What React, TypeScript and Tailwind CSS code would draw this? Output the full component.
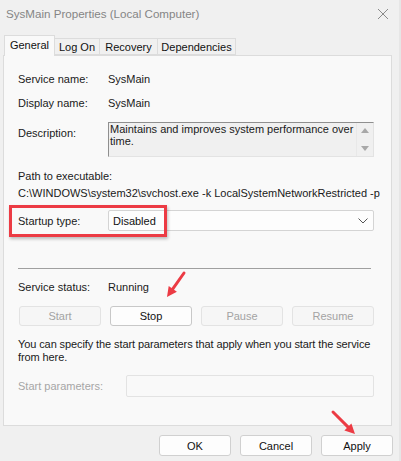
import React from "react";

const font = { fontFamily: '"Liberation Sans", Arial, sans-serif' };

function Btn({ label, disabled, strong }: { label: string; disabled?: boolean; strong?: boolean }) {
  return (
    <div
      className={
        "flex h-[20px] w-[82px] items-center justify-center rounded-[3px] border text-[11px] " +
        (disabled
          ? "border-[#e3e3e3] bg-[#f6f6f6] text-[#a3a3a3]"
          : strong
          ? "border-[#c8c8c8] bg-[#fdfdfd] text-[#111]"
          : "border-[#d0d0d0] bg-[#fdfdfd] text-[#111]")
      }
    >
      {label}
    </div>
  );
}

function FootBtn({ label }: { label: string }) {
  return (
    <div className="flex h-[21px] w-[72px] items-center justify-center rounded-[3px] border border-[#d0d0d0] bg-[#fdfdfd] text-[11px] text-[#111]">
      {label}
    </div>
  );
}

function Row({ label, children }: { label: string; children: React.ReactNode }) {
  return (
    <div className="flex h-[16px] items-center">
      <div className="w-[90px] text-[#1a1a1a]">{label}</div>
      <div className="text-[#1a1a1a]">{children}</div>
    </div>
  );
}

export default function App() {
  return (
    <div className="relative h-[461px] w-[401px] overflow-hidden bg-[#f0f0f0] text-[11px] leading-[16px]" style={font}>
      {/* title bar */}
      <div className="flex h-[28px] items-center justify-between pl-[6px] pr-[12px]">
        <span className="text-[11.6px] text-[#858585]">SysMain Properties (Local Computer)</span>
        <svg width="12" height="12" viewBox="0 0 12 12" className="text-[#8a8a8a]">
          <path d="M1 1 L11 11 M11 1 L1 11" stroke="currentColor" strokeWidth="1" />
        </svg>
      </div>
      <div className="absolute right-0 top-0 h-full w-[2px] bg-[#e6e6e6]" />

      {/* tabs */}
      <div className="ml-[4px] mt-[7px] flex h-[20px] items-end">
        <div className="relative z-10 mb-[-1px] flex h-[21px] w-[51px] items-center justify-center border border-b-0 border-[#dcdcdc] bg-[#f9f9f9] pb-[2px] text-[#111]">
          General
        </div>
        <div className="flex h-[17px] w-[45px] items-center justify-center border border-l-0 border-[#dcdcdc] bg-[#f0f0f0] text-[#111]">
          Log On
        </div>
        <div className="flex h-[17px] w-[58px] items-center justify-center border border-l-0 border-[#dcdcdc] bg-[#f0f0f0] text-[#111]">
          Recovery
        </div>
        <div className="flex h-[17px] w-[78px] items-center justify-center border border-l-0 border-[#dcdcdc] bg-[#f0f0f0] text-[#111]">
          Dependencies
        </div>
      </div>

      {/* panel */}
      <div className="mx-[3px] flex h-[371px] w-[389px] flex-col border border-[#dcdcdc] bg-[#f9f9f9] pl-[14px] pr-[17px]">
        <div className="mt-[15px]">
          <Row label="Service name:">SysMain</Row>
        </div>
        <div className="mt-[8px]">
          <Row label="Display name:">SysMain</Row>
        </div>
        <div className="mt-[11px] flex h-[35px]">
          <div className="w-[90px] pt-[3px] text-[#1a1a1a]">Description:</div>
          <div className="flex flex-1 border border-[#8f8f8f] border-b-[#e3e3e3] border-r-[#e3e3e3] bg-[#f0f0f0]">
            <div className="flex-1 pl-[1px] leading-[12px] text-[#1a1a1a]">
              Maintains and improves system performance over time.
            </div>
            <div className="flex w-[17px] flex-col items-center justify-between border-l border-[#e8e8e8] py-[5px]">
              <svg width="8" height="5" viewBox="0 0 8 5">
                <path d="M0 5 L4 0 L8 5 Z" fill="#a8a8a8" />
              </svg>
              <svg width="8" height="5" viewBox="0 0 8 5">
                <path d="M0 0 L8 0 L4 5 Z" fill="#a8a8a8" />
              </svg>
            </div>
          </div>
        </div>
        <div className="mt-[11px] text-[#1a1a1a]">Path to executable:</div>
        <div className="mt-[1px] whitespace-nowrap text-[#1a1a1a]">
          C:\WINDOWS\system32\svchost.exe -k LocalSystemNetworkRestricted -p
        </div>
        <div className="mt-[9px] flex h-[21px] items-center">
          <div className="w-[90px] text-[#1a1a1a]">Startup type:</div>
          <div className="flex h-[21px] flex-1 items-center justify-between rounded-[2px] border border-[#d4d4d4] bg-[#fdfdfd] pl-[4px] pr-[5px] text-[#111]">
            <span>Disabled</span>
            <svg width="10" height="6" viewBox="0 0 10 6">
              <path d="M0.5 0.5 L5 5 L9.5 0.5" stroke="#555" strokeWidth="1" fill="none" />
            </svg>
          </div>
        </div>
        <div className="mt-[37px] h-px w-[353px] bg-[#a0a0a0]" />
        <div className="mt-[10px]">
          <Row label="Service status:">Running</Row>
        </div>
        <div className="mt-[11px] flex gap-[9px] pl-[1px]">
          <Btn label="Start" disabled />
          <Btn label="Stop" strong />
          <Btn label="Pause" disabled />
          <Btn label="Resume" disabled />
        </div>
        <div className="mt-[12px] w-[360px] leading-[13px] tracking-[-0.1px] text-[#1a1a1a]">
          You can specify the start parameters that apply when you start the service from here.
        </div>
        <div className="mt-[11px] flex h-[22px] items-center">
          <div className="w-[108px] text-[#a6a6a6]">Start parameters:</div>
          <div className="h-[22px] flex-1 rounded-[2px] border border-[#e3e3e3] bg-[#f9f9f9]" />
        </div>
      </div>

      {/* footer buttons */}
      <div className="mt-[9px] flex justify-end gap-[9px] pr-[8px]">
        <FootBtn label="OK" />
        <FootBtn label="Cancel" />
        <FootBtn label="Apply" />
      </div>

      {/* annotations */}
      <div className="pointer-events-none absolute left-[9px] top-[205px] h-[32px] w-[158px] border-[3px] border-[#ec3b44] shadow-[1px_2px_3px_rgba(0,0,0,0.25)]" />
      <svg className="pointer-events-none absolute left-0 top-0" width="401" height="461" viewBox="0 0 401 461">
        <line x1="184" y1="273" x2="172.8" y2="288.8" stroke="#ec3b44" strokeWidth="3" strokeLinecap="round" />
        <polygon points="167,297 176.9,291.7 168.7,285.9" fill="#ec3b44" />
        <line x1="333" y1="412" x2="347.9" y2="426.9" stroke="#ec3b44" strokeWidth="3" strokeLinecap="round" />
        <polygon points="355,434 344.4,430.5 351.4,423.4" fill="#ec3b44" />
      </svg>
    </div>
  );
}
